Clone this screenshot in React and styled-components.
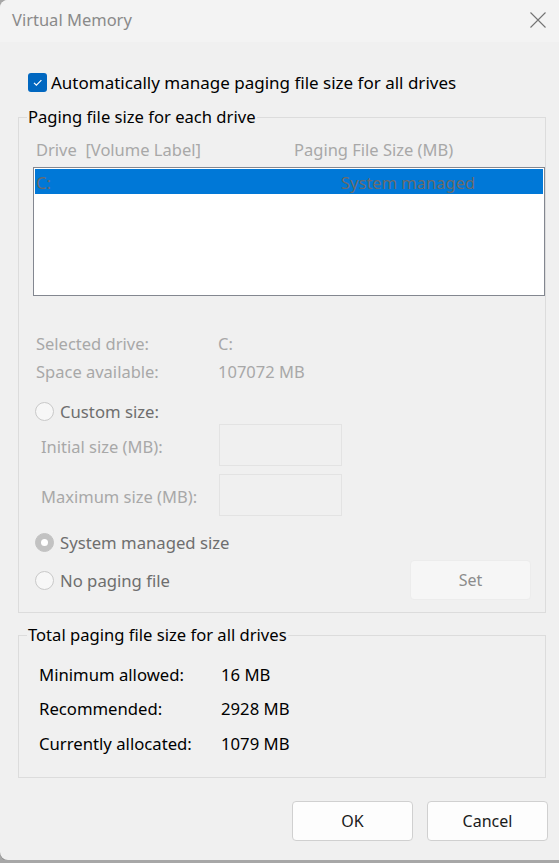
import React from 'react';
import styled, { createGlobalStyle } from 'styled-components';

const GlobalStyle = createGlobalStyle`
  html, body {
    margin: 0;
    padding: 0;
    background: #a7a7a7;
  }
  body {
    font-family: "Noto Sans", "Open Sans", sans-serif;
    color: #000;
  }
`;

const App = () => (
  <>
    <GlobalStyle />
    <Window>
      <TitleBar>
        <Title>Virtual Memory</Title>
        <CloseIcon width="16" height="16" viewBox="0 0 16 16">
          <path d="M0.5 0.5 L15.5 15.5 M15.5 0.5 L0.5 15.5" stroke="#737373" strokeWidth="1.1" fill="none" />
        </CloseIcon>
      </TitleBar>

      <Content>
        <CheckRow>
          <CheckBox>
            <svg width="19" height="19" viewBox="0 0 19 19">
              <polyline points="6,9.8 8.4,12.2 13.4,7.2" stroke="#fff" strokeWidth="1.2" fill="none" />
            </svg>
          </CheckBox>
          <CheckLabel>Automatically manage paging file size for all drives</CheckLabel>
        </CheckRow>

        <Group $top={25} $bottom={12}>
          <GroupLabel>Paging file size for each drive</GroupLabel>

          <HeaderRow>
            <span>Drive&nbsp;&nbsp;[Volume Label]</span>
            <span>Paging File Size (MB)</span>
          </HeaderRow>

          <ListBox>
            <ListRow>
              <span>C:</span>
              <span>System managed</span>
            </ListRow>
          </ListBox>

          <InfoRow $top={38} $indent={17} $disabled>
            <span>Selected drive:</span>
            <span>C:</span>
          </InfoRow>
          <InfoRow $top={8} $indent={17} $disabled>
            <span>Space available:</span>
            <span>107072 MB</span>
          </InfoRow>

          <RadioRow $top={19}>
            <Radio />
            <RadioLabel>Custom size:</RadioLabel>
          </RadioRow>

          <SizeRow $top={3}>
            <span>Initial size (MB):</span>
            <SizeInput />
          </SizeRow>
          <SizeRow $top={8}>
            <span>Maximum size (MB):</span>
            <SizeInput />
          </SizeRow>

          <RadioRow $top={16}>
            <Radio $checked />
            <RadioLabel>System managed size</RadioLabel>
          </RadioRow>

          <SetRow>
            <RadioRow>
              <Radio />
              <RadioLabel>No paging file</RadioLabel>
            </RadioRow>
            <Button $disabled>Set</Button>
          </SetRow>
        </Group>

        <Group $top={22} $bottom={23}>
          <GroupLabel>Total paging file size for all drives</GroupLabel>
          <InfoRow $top={20} $indent={20}>
            <span>Minimum allowed:</span>
            <span>16 MB</span>
          </InfoRow>
          <InfoRow $top={14} $indent={20}>
            <span>Recommended:</span>
            <span>2928 MB</span>
          </InfoRow>
          <InfoRow $top={15} $indent={20}>
            <span>Currently allocated:</span>
            <span>1079 MB</span>
          </InfoRow>
        </Group>

        <ButtonRow>
          <Button>OK</Button>
          <Button>Cancel</Button>
        </ButtonRow>
      </Content>
    </Window>
  </>
);

export default App;

// Styling
const Window = styled.div`
  width: 559px;
  height: 860px;
  background: #f0f0f0;
  border-radius: 8px 0 0 8px;
  box-shadow: 0 1px 0 #8e8e8e;
  display: flex;
  flex-direction: column;
  overflow: hidden;
`;

const TitleBar = styled.div`
  height: 42px;
  flex-shrink: 0;
  background: #f3f3f3;
  display: flex;
  align-items: center;
  justify-content: space-between;
  padding: 0 13px 0 12px;
`;

const Title = styled.span`
  font-size: 16.5px;
  color: #8a8a8a;
  margin-top: -3px;
`;

const CloseIcon = styled.svg`
  margin-top: -3px;
`;

const Content = styled.div`
  display: flex;
  flex-direction: column;
  padding: 0 11px 0 18px;
`;

const CheckRow = styled.div`
  display: flex;
  align-items: center;
  height: 19px;
  margin: 31px 0 0 10px;
`;

const CheckBox = styled.div`
  width: 19px;
  height: 19px;
  border-radius: 3px;
  background: #0067c0;
  flex-shrink: 0;
  svg {
    display: block;
  }
`;

const CheckLabel = styled.span`
  font-size: 17px;
  margin: 1px 0 0 4px;
  line-height: 20px;
`;

const Group = styled.div`
  display: flex;
  flex-direction: column;
  border: 1px solid #dcdcdc;
  margin: ${(p) => p.$top}px 2px 0 0;
  padding-bottom: ${(p) => p.$bottom}px;
`;

const GroupLabel = styled.span`
  align-self: flex-start;
  margin: -11px 0 0 8px;
  padding: 0 1px;
  background: #f0f0f0;
  font-size: 16.6px;
  line-height: 20px;
`;

const HeaderRow = styled.div`
  display: grid;
  grid-template-columns: 258px auto;
  height: 20px;
  line-height: 20px;
  margin-top: 13px;
  padding-left: 17px;
  font-size: 16.5px;
  color: #a8a8a8;
  white-space: pre;
`;

const ListBox = styled.div`
  height: 125px;
  margin: 7px 0 0 14px;
  border: 1px solid #838790;
  background: #fff;
  padding: 1px;
`;

const ListRow = styled.div`
  display: grid;
  grid-template-columns: 305px auto;
  height: 25px;
  line-height: 27px;
  background: #0078d7;
  padding-left: 1px;
  font-size: 16.5px;
  color: #6b6b6b;
  overflow: hidden;
`;

const InfoRow = styled.div`
  display: grid;
  grid-template-columns: 182px auto;
  height: 20px;
  line-height: 20px;
  margin-top: ${(p) => p.$top}px;
  padding-left: ${(p) => p.$indent}px;
  font-size: ${(p) => (p.$disabled ? 16.5 : 16.7)}px;
  color: ${(p) => (p.$disabled ? '#a8a8a8' : '#000')};
`;

const RadioRow = styled.div`
  display: flex;
  align-items: center;
  height: 20px;
  margin-top: ${(p) => p.$top || 0}px;
  padding-left: 16px;
`;

const Radio = styled.span`
  box-sizing: border-box;
  width: 19px;
  height: 19px;
  border-radius: 50%;
  flex-shrink: 0;
  display: flex;
  align-items: center;
  justify-content: center;
  border: 1px solid ${(p) => (p.$checked ? '#c2c2c2' : '#c9c9c9')};
  background: ${(p) => (p.$checked ? '#c2c2c2' : '#f7f7f7')};
  &::after {
    content: '';
    display: ${(p) => (p.$checked ? 'block' : 'none')};
    width: 7px;
    height: 7px;
    border-radius: 50%;
    background: #fff;
  }
`;

const RadioLabel = styled.span`
  margin-left: 6px;
  font-size: 16.7px;
  color: #6e6e6e;
`;

const SizeRow = styled.div`
  display: grid;
  grid-template-columns: 178px 123px;
  align-items: center;
  height: 42px;
  margin-top: ${(p) => p.$top}px;
  padding-left: 22px;
  font-size: 16.5px;
  color: #a8a8a8;
  span {
    margin-top: 3px;
  }
`;

const SizeInput = styled.div`
  box-sizing: border-box;
  height: 42px;
  border: 1px solid #e3e3e3;
  background: #f0f0f0;
`;

const SetRow = styled.div`
  display: flex;
  align-items: center;
  justify-content: space-between;
  margin-top: 8px;
  padding-right: 14px;
  div {
    margin-top: 1px;
  }
`;

const Button = styled.button`
  box-sizing: border-box;
  width: 121px;
  height: 40px;
  border-radius: 4px;
  border: 1px solid ${(p) => (p.$disabled ? '#ececec' : '#d0d0d0')};
  background: ${(p) => (p.$disabled ? '#f6f6f6' : '#fdfdfd')};
  color: ${(p) => (p.$disabled ? '#8c8c8c' : '#1a1a1a')};
  font-family: inherit;
  font-size: 16px;
  padding: 0;
`;

const ButtonRow = styled.div`
  display: flex;
  justify-content: flex-end;
  gap: 14px;
  margin-top: 23px;
`;
